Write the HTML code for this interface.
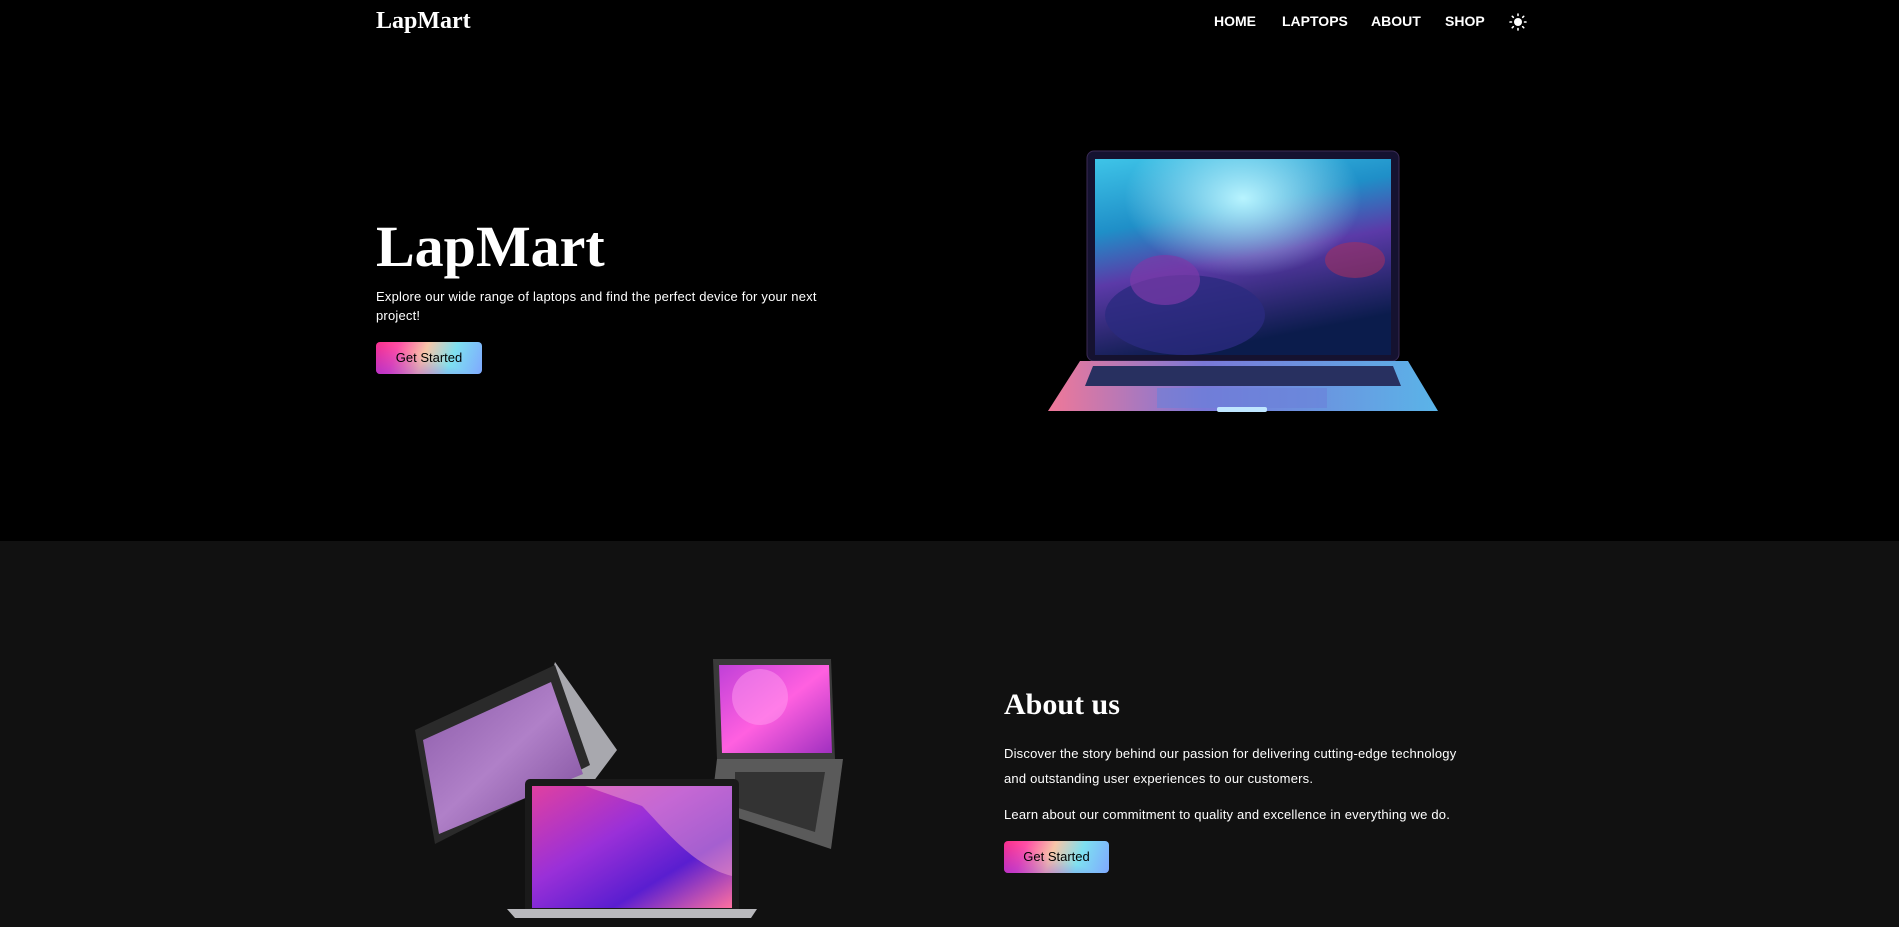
<!DOCTYPE html>
<html><head><meta charset="utf-8"><style>
*{margin:0;padding:0;box-sizing:border-box}
html,body{width:1899px;height:927px;overflow:hidden;background:#000;font-family:"Liberation Sans",sans-serif;color:#fff}
.abs{position:absolute}
.logo{left:376px;top:8px;font:bold 24px "Liberation Serif",serif}
.nav a{position:absolute;top:13px;font:bold 14px "Liberation Sans",sans-serif;color:#fff;text-decoration:none}
h1{left:376px;top:212px;font:bold 58px "Liberation Serif",serif;line-height:70px}
.p{font-size:13px;line-height:19px;letter-spacing:.2px}
.btn{position:absolute;width:106px;height:32px;border-radius:4px;color:#000;font-size:13px;text-align:center;line-height:32px;letter-spacing:0;
background:linear-gradient(110deg,#ff2f87 0%,#ff4fa6 20%,#f7c6a8 45%,#7ee0f0 70%,#7fa8ff 100%)}
.btn::before{content:"";position:absolute;inset:0;border-radius:4px;background:linear-gradient(200deg,rgba(255,255,255,0) 50%,rgba(140,40,230,.6) 100%)}
.btn span{position:relative}
.sec2{left:0;top:541px;width:1899px;height:386px;background:#111}
h2{left:1004px;top:688px;font:bold 30px "Liberation Serif",serif}
</style></head><body>
<div class="abs logo">LapMart</div>
<div class="nav">
<a style="left:1214px">HOME</a><a style="left:1282px">LAPTOPS</a><a style="left:1371px">ABOUT</a><a style="left:1445px">SHOP</a>
<svg class="abs" style="left:1509px;top:13px" width="18" height="18" viewBox="0 0 18 18"><circle cx="9" cy="9" r="4" fill="#fff"/><g stroke="#fff" stroke-width="1.6" stroke-linecap="round"><path d="M9 1v1.5M9 15.5V17M1 9h1.5M15.5 9H17M3.3 3.3l1 1M13.7 13.7l1 1M3.3 14.7l1-1M13.7 4.3l1-1"/></g></svg>
</div>
<h1 class="abs">LapMart</h1>
<div class="abs p" style="left:376px;top:287px;width:460px">Explore our wide range of laptops and find the perfect device for your next project!</div>
<div class="btn" style="left:376px;top:342px"><span>Get Started</span></div>

<svg class="abs" style="left:1045px;top:150px" width="400" height="265" viewBox="0 0 400 265">
<defs>
<linearGradient id="scr" x1="0" y1="0" x2="0.3" y2="1"><stop offset="0" stop-color="#3ec4e8"/><stop offset=".35" stop-color="#1f8fc8"/><stop offset=".6" stop-color="#5b3aa8"/><stop offset="1" stop-color="#0b1c4c"/></linearGradient>
<radialGradient id="glow" cx=".5" cy=".2" r=".4"><stop offset="0" stop-color="#b8f4ff"/><stop offset="1" stop-color="#b8f4ff" stop-opacity="0"/></radialGradient>
<linearGradient id="base" x1="0" x2="1"><stop offset="0" stop-color="#f07898"/><stop offset=".4" stop-color="#7a78d8"/><stop offset="1" stop-color="#5ab4e8"/></linearGradient>
</defs>
<rect x="42" y="1" width="312" height="210" rx="7" fill="#151230" stroke="#3a2a55"/>
<rect x="50" y="9" width="296" height="196" fill="url(#scr)"/>
<rect x="50" y="9" width="296" height="196" fill="url(#glow)"/>
<ellipse cx="140" cy="165" rx="80" ry="40" fill="#2a2a80" opacity=".8"/>
<ellipse cx="120" cy="130" rx="35" ry="25" fill="#7a3aa8" opacity=".7"/>
<ellipse cx="310" cy="110" rx="30" ry="18" fill="#a03060" opacity=".6"/>
<path d="M35 211h328l30 50H3z" fill="url(#base)"/>
<path d="M48 216h300l8 20H40z" fill="#283060"/>
<rect x="112" y="238" width="170" height="20" fill="#6a80d8" opacity=".6"/>
<rect x="172" y="257" width="50" height="5" rx="2" fill="#bfe6ff"/>
</svg>

<div class="abs sec2"></div>
<svg class="abs" style="left:405px;top:652px" width="440" height="270" viewBox="0 0 440 270">
<defs>
<linearGradient id="mac" x1="0" y1="0" x2="1" y2="1"><stop offset="0" stop-color="#e040a0"/><stop offset=".4" stop-color="#9a30d8"/><stop offset=".7" stop-color="#5a1ed0"/><stop offset="1" stop-color="#ff70a0"/></linearGradient>
<linearGradient id="jel" x1="0" y1="0" x2="1" y2="1"><stop offset="0" stop-color="#c040d8"/><stop offset=".5" stop-color="#ff60e0"/><stop offset="1" stop-color="#a030c0"/></linearGradient>
<linearGradient id="dell" x1="0" y1="0" x2="1" y2="1"><stop offset="0" stop-color="#8a5aa8"/><stop offset=".5" stop-color="#b080c8"/><stop offset="1" stop-color="#7a4a98"/></linearGradient>
</defs>
<path d="M150 10l62 88-30 40-60-30z" fill="#a8a8ae"/>
<path d="M10 78l140-65 35 100L30 192z" fill="#2a2a2a"/>
<path d="M18 88l128-58 32 92L34 182z" fill="url(#dell)"/>
<path d="M308 7h118l4 100H312z" fill="#3a3a3a"/>
<path d="M314 13h110l3 88H317z" fill="url(#jel)"/>
<circle cx="355" cy="45" r="28" fill="#ff9af0" opacity=".5"/>
<path d="M312 107h118l8 0-12 90-60-20-60-20z" fill="#5a5a5a"/>
<path d="M330 120h90l-10 60-80-25z" fill="#333"/>
<rect x="120" y="127" width="214" height="135" rx="5" fill="#1a1a1a"/>
<rect x="127" y="134" width="200" height="122" fill="url(#mac)"/>
<path d="M180 134h147v90c-40-10-70-50-90-70z" fill="#f0a0d0" opacity=".5"/>
<path d="M102 257h250l-6 9H110z" fill="#b8b8bc"/>
</svg>

<h2 class="abs">About us</h2>
<div class="abs p" style="left:1004px;top:741px;width:520px;line-height:25px">Discover the story behind our passion for delivering cutting-edge technology<br>and outstanding user experiences to our customers.</div>
<div class="abs p" style="left:1004px;top:805px">Learn about our commitment to quality and excellence in everything we do.</div>
<div class="btn" style="left:1004px;top:841px;width:105px"><span>Get Started</span></div>
</body></html>
